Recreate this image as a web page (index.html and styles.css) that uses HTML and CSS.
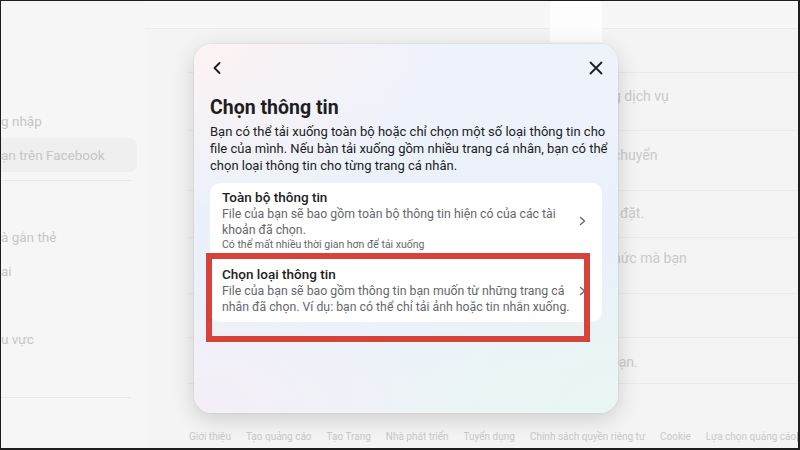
FILE: index.html
```html
<!DOCTYPE html>
<html lang="vi">
<head>
<meta charset="utf-8">
<title>Chọn thông tin</title>
<link rel="stylesheet" href="styles.css">
</head>
<body>
<div class="screen">
  <aside class="sidebar">
    <div class="side-group">
      <div class="side-item">g nhập</div>
      <div class="side-item side-item--active">ạn trên Facebook</div>
    </div>
    <div class="side-sep"></div>
    <div class="side-group side-group--second">
      <div class="side-item">à gắn thẻ</div>
      <div class="side-item">ai</div>
      <div class="side-item"></div>
      <div class="side-item">u vực</div>
    </div>
    <div class="side-sep side-sep--bottom"></div>
  </aside>

  <main class="main">
    <div class="topbar"></div>
    <div class="rows">
      <div class="row row--0"></div>
      <div class="row row--1"><span class="row-text">g dịch vụ</span></div>
      <div class="row row--2"><span class="row-text">chuyển</span></div>
      <div class="row row--3"><span class="row-text">i đặt.</span></div>
      <div class="row row--4"><span class="row-text">hức mà bạn</span></div>
      <div class="row row--5"></div>
      <div class="row row--6"><span class="row-text">i bạn.</span></div>
    </div>
    <footer class="footer">
      <span>Giới thiệu</span>
      <span>Tạo quảng cáo</span>
      <span>Tạo Trang</span>
      <span>Nhà phát triển</span>
      <span>Tuyển dụng</span>
      <span>Chính sách quyền riêng tư</span>
      <span>Cookie</span>
      <span>Lựa chọn quảng cáo</span>
      <span class="adchoice"></span>
    </footer>
  </main>

  <div class="top-white"></div>

  <div class="modal">
    <div class="modal-head">
      <span class="icon-btn">
        <svg width="14" height="14" viewBox="0 0 14 14"><polyline points="9.5,2 4.5,7 9.5,12" fill="none" stroke="#1c1e21" stroke-width="1.8" stroke-linecap="round" stroke-linejoin="round"/></svg>
      </span>
      <span class="icon-btn">
        <svg width="14" height="14" viewBox="0 0 14 14"><path d="M1.5 1.5L12.5 12.5M12.5 1.5L1.5 12.5" fill="none" stroke="#1c1e21" stroke-width="1.8" stroke-linecap="round"/></svg>
      </span>
    </div>
    <h1 class="modal-title">Chọn thông tin</h1>
    <p class="modal-desc">Bạn có thể tải xuống toàn bộ hoặc chỉ chọn một số loại thông tin cho<br>file của mình. Nếu bàn tải xuống gồm nhiều trang cá nhân, bạn có thể<br>chọn loại thông tin cho từng trang cá nhân.</p>

    <div class="card">
      <div class="option option--first">
        <div class="option-body">
          <div class="option-title">Toàn bộ thông tin</div>
          <div class="option-desc">File của bạn sẽ bao gồm toàn bộ thông tin hiện có của các tài<br>khoản đã chọn.</div>
          <div class="option-note">Có thể mất nhiều thời gian hơn để tải xuống</div>
        </div>
        <svg class="chev" width="7" height="10" viewBox="0 0 7 10"><polyline points="1.5,1.5 5.5,5 1.5,8.5" fill="none" stroke="#65676b" stroke-width="1.4" stroke-linecap="round" stroke-linejoin="round"/></svg>
      </div>
      <div class="option option--second">
        <div class="option-body">
          <div class="option-title">Chọn loại thông tin</div>
          <div class="option-desc">File của bạn sẽ bao gồm thông tin bạn muốn từ những trang cá<br>nhân đã chọn. Ví dụ: bạn có thể chỉ tải ảnh hoặc tin nhắn xuống.</div>
        </div>
        <svg class="chev" width="7" height="10" viewBox="0 0 7 10"><polyline points="1.5,1.5 5.5,5 1.5,8.5" fill="none" stroke="#65676b" stroke-width="1.4" stroke-linecap="round" stroke-linejoin="round"/></svg>
      </div>
    </div>
  </div>

  <div class="annotation"></div>
</div>
</body>
</html>
```

FILE: styles.css
```css
* { box-sizing: border-box; }

html, body {
  margin: 0;
  padding: 0;
  background: #1d1d1d;
}

body {
  font-family: Roboto, "Noto Sans", "Liberation Sans", sans-serif;
}

.screen {
  position: relative;
  width: 800px;
  height: 450px;
  border-style: solid;
  border-color: #1e1e1e;
  border-width: 1px 2px 2px 1px;
  background: #f4f4f4;
  display: flex;
  overflow: hidden;
}

/* ---------- sidebar (dimmed background page) ---------- */
.sidebar {
  width: 144px;
  flex: none;
  background: #f6f6f6;
  padding-top: 103px;
}

.side-item {
  height: 34px;
  line-height: 34px;
  font-size: 13.5px;
  color: #c6c6c6;
  white-space: nowrap;
  width: 136px;
}

.side-item--active {
  background: #efefef;
  border-radius: 0 8px 8px 0;
}

.side-sep {
  width: 130px;
  height: 1px;
  background: #e9e9e9;
  margin-top: 8px;
}

.side-group--second { margin-top: 39px; }
.side-sep--bottom { margin-top: 41px; }

/* ---------- main page ---------- */
.main {
  flex: 1;
  display: flex;
  flex-direction: column;
  min-width: 0;
}

.topbar {
  height: 28px;
  flex: none;
  background: #f7f7f7;
  border-bottom: 1px solid #eaeaea;
}

.rows {
  margin-left: 43px;
  flex: none;
}

.row {
  border-bottom: 1px solid #eaeaea;
  font-size: 14px;
  line-height: 18px;
  color: #cacaca;
  padding-left: 425px;
  white-space: nowrap;
}

.row--0 { height: 44px; }
.row--1 { height: 58px; padding-top: 14px; }
.row--2 { height: 60px; padding-top: 15px; }
.row--3 { height: 47px; padding-top: 13px; }
.row--4 { height: 56px; padding-top: 11px; }
.row--5 { height: 44px; }
.row--6 { height: 46px; padding-top: 15px; padding-left: 416px; }

.footer {
  flex: 1;
  padding: 46px 0 0 44px;
  display: flex;
  gap: 15px;
  font-size: 10px;
  line-height: 14px;
  color: #c8c8c8;
  white-space: nowrap;
  overflow: hidden;
}

.adchoice {
  width: 8px;
  height: 10px;
  margin-top: 2px;
  margin-left: -14px;
  border: 1px solid #b8b8b8;
  flex: none;
}

.top-white {
  position: absolute;
  left: 549px;
  top: 0;
  width: 52px;
  height: 41px;
  background: #fdfdfd;
}

/* ---------- modal ---------- */
.modal {
  position: absolute;
  left: 193px;
  top: 43px;
  width: 424px;
  height: 369px;
  border-radius: 18px;
  padding: 0 16px;
  background:
    radial-gradient(ellipse 60% 45% at 0% 0%, #fdf3f3 0%, rgba(253,243,243,0) 100%),
    radial-gradient(ellipse 55% 40% at 0% 100%, #f5eef7 0%, rgba(245,238,247,0) 100%),
    radial-gradient(ellipse 60% 45% at 100% 100%, #e8f6f3 0%, rgba(232,246,243,0) 100%),
    linear-gradient(180deg, #eef2fb 0%, #eaf1fb 60%, #edf3f7 100%);
  box-shadow: 0 6px 22px rgba(0, 0, 0, 0.16), 0 0 0 1px rgba(0, 0, 0, 0.03);
}

.modal-head {
  height: 48px;
  display: flex;
  align-items: center;
  justify-content: space-between;
}

.icon-btn {
  display: flex;
  width: 14px;
  height: 14px;
}

.modal-head .icon-btn:last-child { margin-right: -1px; }

.modal-title {
  margin: 5px 0 0;
  font-size: 19.5px;
  line-height: 22px;
  font-weight: 700;
  color: #1c1e21;
}

.modal-desc {
  margin: 4px 0 0;
  font-size: 13px;
  line-height: 17px;
  color: #1c1e21;
  white-space: nowrap;
}

.card {
  margin-top: 9px;
  background: #ffffff;
  border-radius: 10px;
}

.option {
  display: flex;
  align-items: center;
  padding: 6px 16px 7px 12px;
}

.option--second { padding-top: 7px; }

.option-body {
  flex: 1;
  min-width: 0;
}

.option-title {
  font-size: 13.5px;
  line-height: 17px;
  font-weight: 500;
  color: #1c1e21;
  white-space: nowrap;
}

.option-desc {
  font-size: 12.3px;
  line-height: 16px;
  color: #65676b;
  white-space: nowrap;
}

.option-note {
  font-size: 10.5px;
  line-height: 14px;
  color: #65676b;
  white-space: nowrap;
}

.chev {
  flex: none;
  margin-left: 10px;
}

/* ---------- red annotation frame ---------- */
.annotation {
  position: absolute;
  left: 205px;
  top: 252px;
  width: 384px;
  height: 89px;
  border: 6px solid #d6433b;
}
```
